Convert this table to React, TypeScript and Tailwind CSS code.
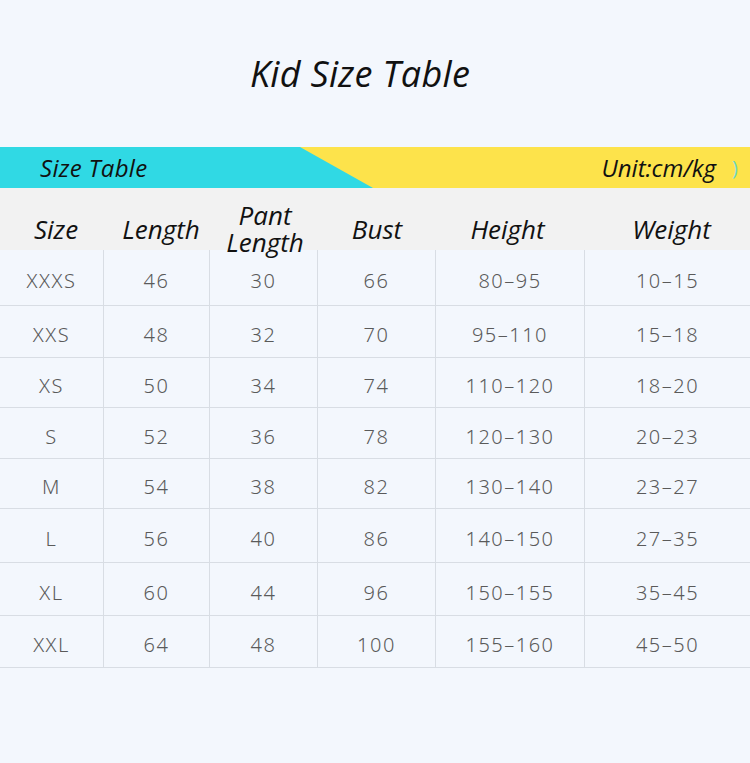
import React from 'react';

const cols = ['w-[104px]', 'w-[106px]', 'w-[108px]', 'w-[118px]', 'w-[149px]', 'flex-1'];

const heads = [
  { t: 'Size', pad: 'pl-[8px]' },
  { t: 'Length', pad: 'pl-[8px]' },
  { t: 'Pant\nLength', pad: 'pl-[2px]' },
  { t: 'Bust', pad: '' },
  { t: 'Height', pad: 'pr-[6px]' },
  { t: 'Weight', pad: 'pl-[8px]' },
];

const rows = [
  { h: 'h-[55px]', cells: ['XXXS', '46', '30', '66', '80–95', '10–15'] },
  { h: 'h-[52px]', cells: ['XXS', '48', '32', '70', '95–110', '15–18'] },
  { h: 'h-[50px]', cells: ['XS', '50', '34', '74', '110–120', '18–20'] },
  { h: 'h-[51px]', cells: ['S', '52', '36', '78', '120–130', '20–23'] },
  { h: 'h-[50px]', cells: ['M', '54', '38', '82', '130–140', '23–27'] },
  { h: 'h-[54px]', cells: ['L', '56', '40', '86', '140–150', '27–35'] },
  { h: 'h-[53px]', cells: ['XL', '60', '44', '96', '150–155', '35–45'] },
  { h: 'h-[52px]', cells: ['XXL', '64', '48', '100', '155–160', '45–50'] },
];

export default function App() {
  return (
    <div className="w-[750px] h-[763px] bg-[#f3f7fd] overflow-hidden" style={{ fontFamily: '"Open Sans", "Noto Sans", sans-serif' }}>
      <div className="h-[147px] flex items-center justify-center pr-[30px]">
        <h1 className="italic text-[36px] text-[#111] tracking-[0.3px]">Kid Size Table</h1>
      </div>

      {/* banner */}
      <div className="relative h-[41px] bg-[#fde34b] flex items-center">
        <div className="absolute inset-0 bg-[#30d9e4] [clip-path:polygon(0_0,300px_0,373px_100%,0_100%)]" />
        <span className="relative pl-[40px] italic text-[24px] text-[#111] tracking-[0.3px]">Size Table</span>
        <span className="relative ml-auto pr-[34px] italic text-[24px] text-[#111]">Unit:cm/kg</span>
        <span className="absolute right-[12px] top-[6px] text-[20px] text-[#6fd8c8]">)</span>
      </div>

      {/* header */}
      <div className="flex h-[62px] bg-[#f2f2f2]">
        {heads.map((h, i) => (
          <div key={i} className={`${cols[i]} ${h.pad} flex items-center justify-center text-center italic text-[26px] leading-[27px] text-[#111] whitespace-pre-line pt-[20px]`}>
            {h.t}
          </div>
        ))}
      </div>

      {/* body */}
      <div className="border-b border-[#d8dde4]">
        {rows.map((r, ri) => (
          <div key={ri} className={`flex ${r.h} ${ri > 0 ? 'border-t border-[#d8dde4]' : ''}`}>
            {r.cells.map((c, ci) => (
              <div
                key={ci}
                className={`${cols[ci]} ${ci < 5 ? 'border-r border-[#d8dde4]' : ''} flex items-center justify-center pt-[7px] text-[20px] text-[#5a5a5a] tracking-[1.5px] font-light`}
                style={{ fontFamily: '"Noto Sans", sans-serif' }}
              >
                {c}
              </div>
            ))}
          </div>
        ))}
      </div>
    </div>
  );
}
